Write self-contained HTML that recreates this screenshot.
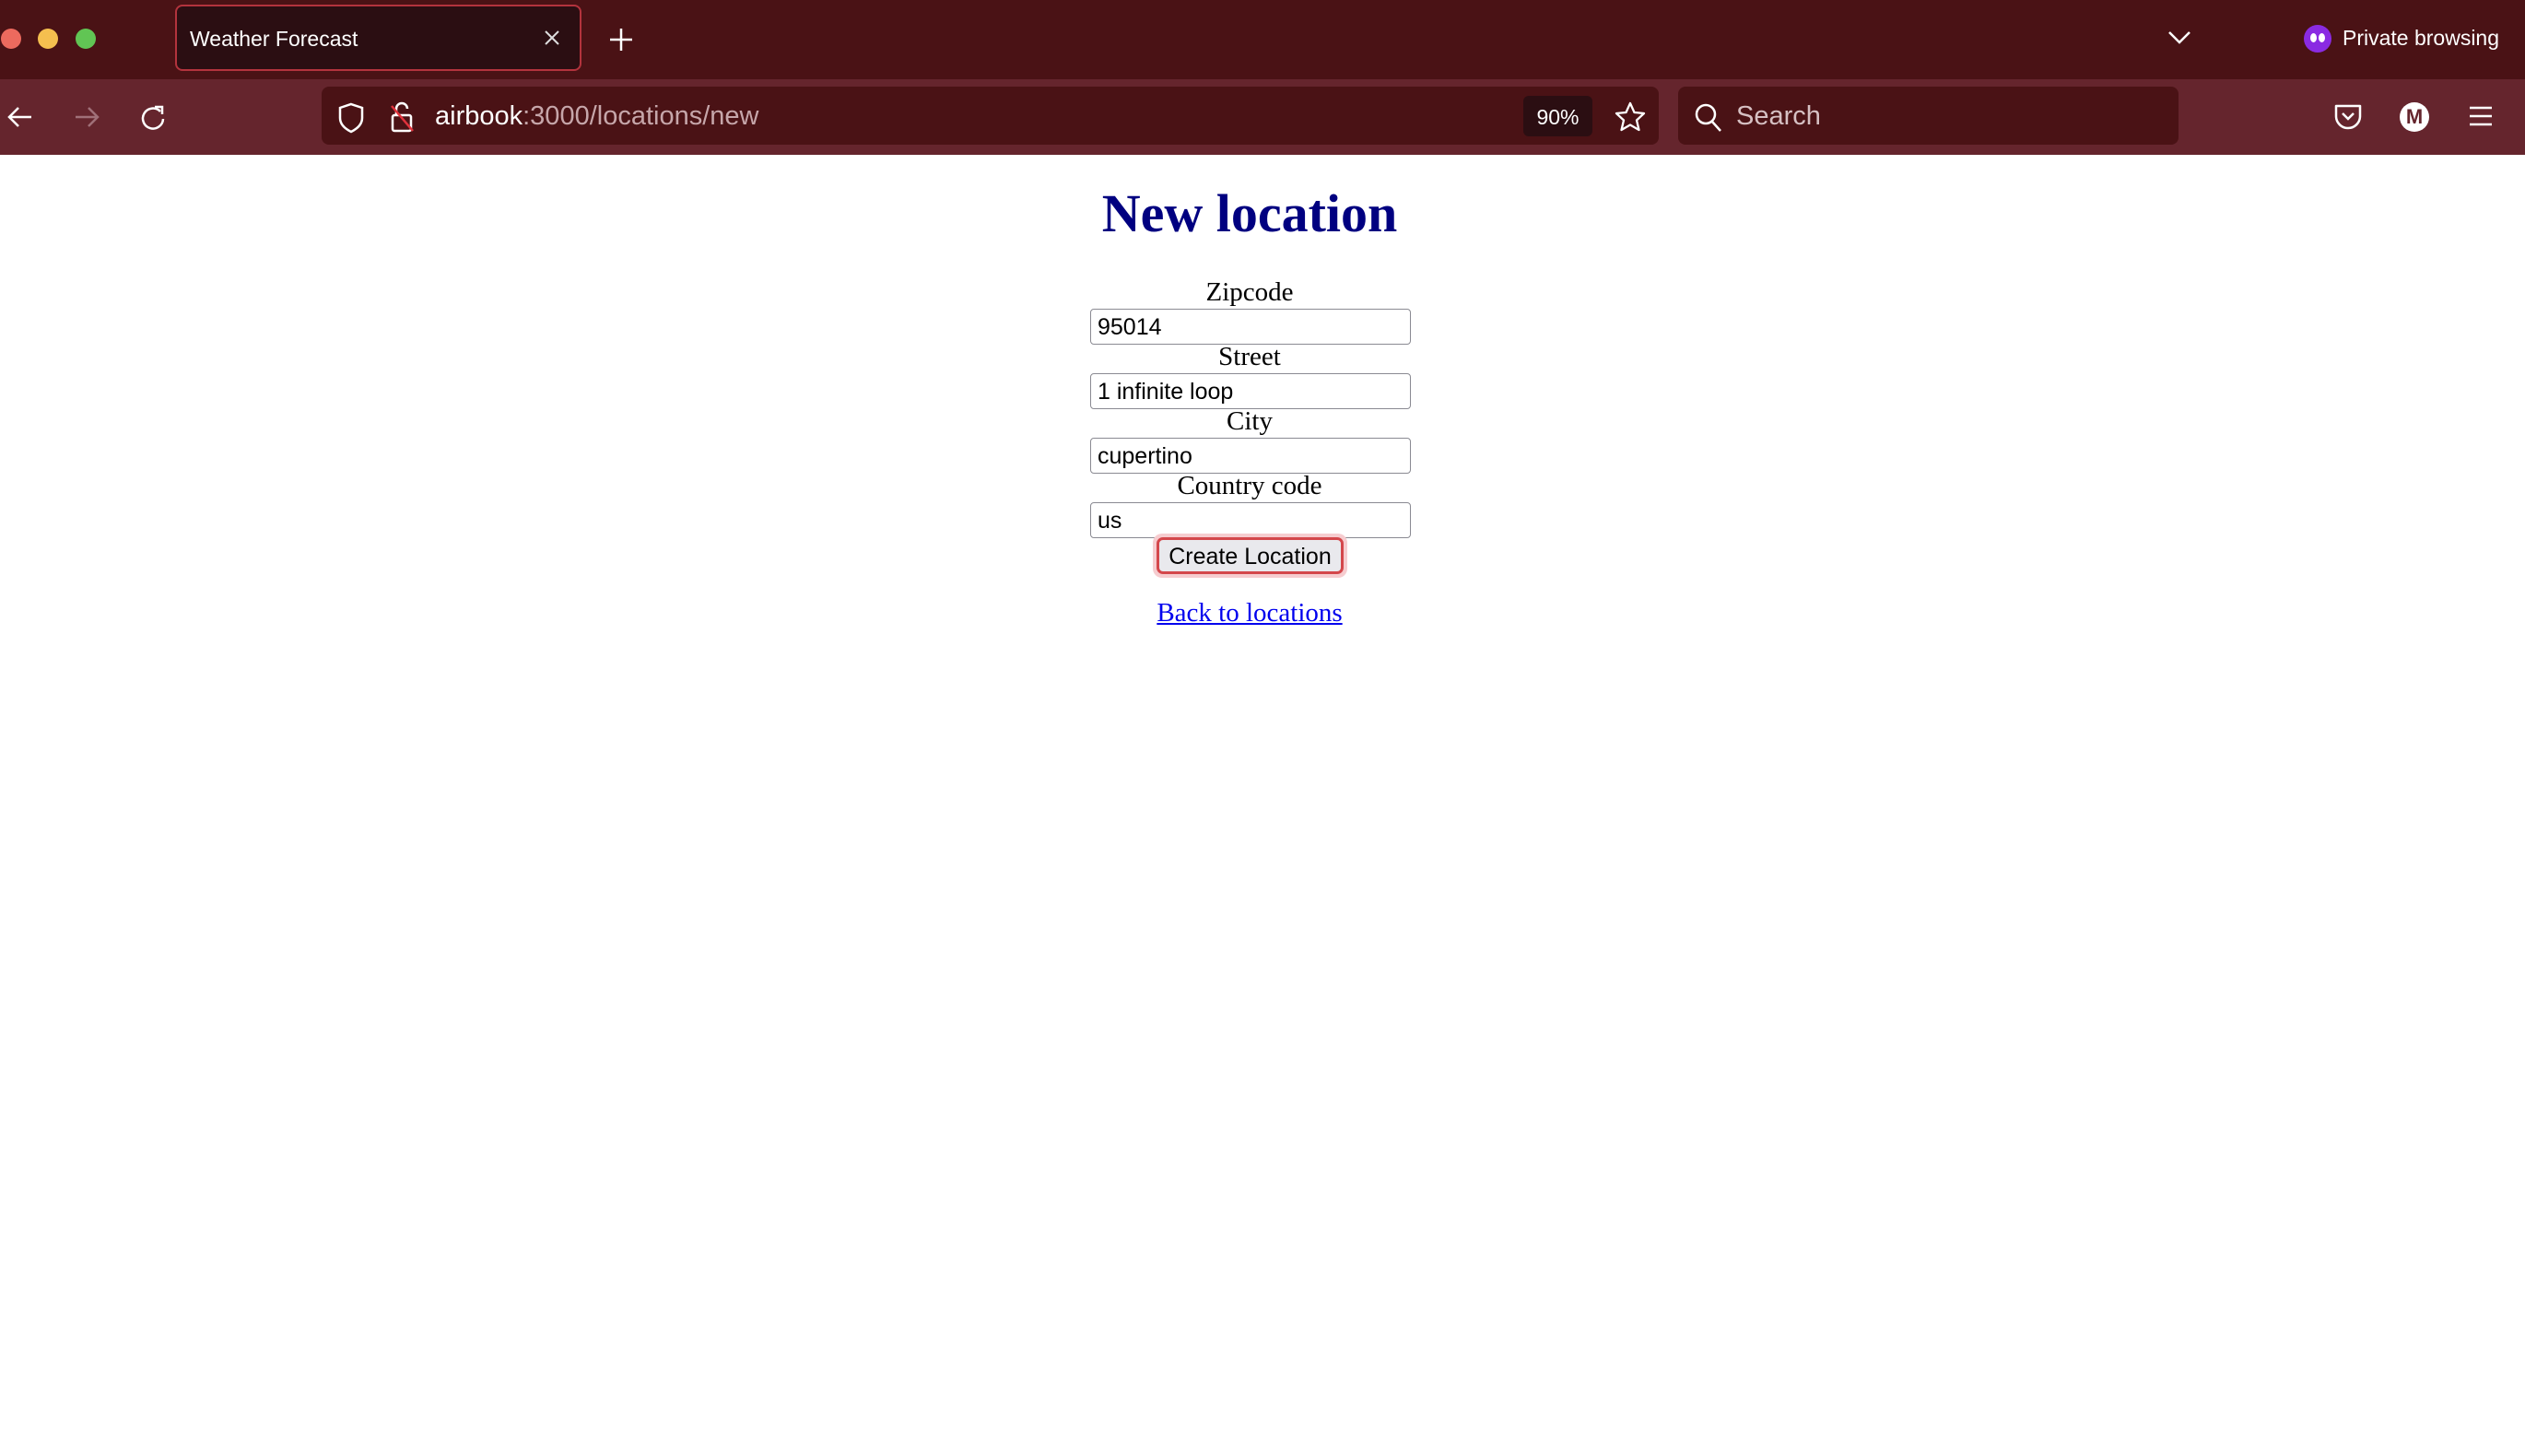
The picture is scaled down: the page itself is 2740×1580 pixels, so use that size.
<!DOCTYPE html>
<html><head><meta charset="utf-8"><style>
*{margin:0;padding:0;box-sizing:border-box}
body{width:2740px;height:1580px;background:#fff;position:relative;overflow:hidden;font-family:"Liberation Sans",sans-serif}
.abs{position:absolute}
#tabs{left:0;top:0;width:2740px;height:86px;background:#4a1215}
#tool{left:0;top:86px;width:2740px;height:82px;background:#65252d}
.dot{width:22px;height:22px;border-radius:50%;top:31px}
.tab{left:190px;top:5px;width:441px;height:72px;background:#2b0e12;border:2px solid #b3333d;border-radius:8px}
.lbl{left:1156px;width:400px;text-align:center;font-family:"Liberation Serif",serif;font-size:29px;color:#000;line-height:34px}
.inp{left:1183px;width:348px;height:39px;border:1.5px solid #8a8a92;border-radius:4px;font-size:25px;padding-left:7px;line-height:38px;color:#000}
</style></head><body>
<div id="tabs" class="abs"></div>
<div id="tool" class="abs"></div>
<div class="abs dot" style="left:1px;background:#ed6a5e"></div>
<div class="abs dot" style="left:41px;background:#f5bf4f"></div>
<div class="abs dot" style="left:82px;background:#61c554"></div>
<div class="abs tab"></div>
<div class="abs" style="left:206px;top:29px;color:#fff;font-size:23px">Weather Forecast</div>
<svg class="abs" style="left:590px;top:32px" width="18" height="18"><path d="M2 2L16 16M16 2L2 16" stroke="#ddd" stroke-width="2"/></svg>
<svg class="abs" style="left:660px;top:29px" width="28" height="28"><path d="M14 2V26M2 14H26" stroke="#fff" stroke-width="2.5"/></svg>
<svg class="abs" style="left:2352px;top:33px" width="26" height="16"><path d="M2 2L13 13L24 2" stroke="#fff" stroke-width="2.5" fill="none"/></svg>
<div class="abs" style="left:2500px;top:27px;width:30px;height:30px;border-radius:50%;background:#8a2be2"></div>
<div class="abs" style="left:2507px;top:36px;width:7px;height:10px;border-radius:50%;background:#fff"></div>
<div class="abs" style="left:2516px;top:36px;width:7px;height:10px;border-radius:50%;background:#fff"></div>
<div class="abs" style="left:2542px;top:28px;color:#fff;font-size:23px">Private browsing</div>
<svg class="abs" style="left:6px;top:113px" width="32" height="28"><path d="M28 14H4M14 4L4 14L14 24" stroke="#fff" stroke-width="2.5" fill="none"/></svg>
<svg class="abs" style="left:78px;top:113px" width="32" height="28"><path d="M4 14H28M18 4L28 14L18 24" stroke="#a07078" stroke-width="2.5" fill="none"/></svg>
<svg class="abs" style="left:150px;top:112px" width="32" height="32"><path d="M24 9A11 11 0 1 0 27 17" stroke="#fff" stroke-width="2.5" fill="none"/><path d="M18 4L26 4L26 12" stroke="#fff" stroke-width="2.5" fill="none"/></svg>
<div class="abs" style="left:349px;top:94px;width:1451px;height:63px;background:#4a1215;border-radius:8px"></div>
<svg class="abs" style="left:366px;top:111px" width="30" height="34"><path d="M15 2L27 6V17C27 24 21 29 15 32C9 29 3 24 3 17V6Z" stroke="#fff" stroke-width="2.5" fill="none"/></svg>
<svg class="abs" style="left:422px;top:109px" width="30" height="36"><rect x="4" y="16" width="20" height="17" rx="2" stroke="#fff" stroke-width="2.5" fill="none"/><path d="M8 16V9A6 6 0 0 1 20 9" stroke="#fff" stroke-width="2.5" fill="none"/><path d="M3 6L26 33" stroke="#e0323c" stroke-width="2.5"/></svg>
<div class="abs" style="left:472px;top:110px;font-size:29px;color:#fff">airbook<span style="color:#c6a6aa">:3000/locations/new</span></div>
<div class="abs" style="left:1653px;top:104px;width:75px;height:44px;background:#2b0e12;border-radius:6px;color:#fff;font-size:23px;text-align:center;line-height:46px">90%</div>
<svg class="abs" style="left:1752px;top:110px" width="34" height="34"><path d="M17 2L21.5 12L32 13L24 20.5L26.5 31L17 25.5L7.5 31L10 20.5L2 13L12.5 12Z" stroke="#fff" stroke-width="2.3" fill="none" stroke-linejoin="round"/></svg>
<div class="abs" style="left:1821px;top:94px;width:543px;height:63px;background:#4a1215;border-radius:8px"></div>
<svg class="abs" style="left:1838px;top:111px" width="32" height="34"><circle cx="13" cy="13" r="10" stroke="#fff" stroke-width="2.5" fill="none"/><path d="M20 21L29 31" stroke="#fff" stroke-width="2.5"/></svg>
<div class="abs" style="left:1884px;top:110px;font-size:29px;color:#d6c0c3">Search</div>
<svg class="abs" style="left:2532px;top:111px" width="32" height="32"><path d="M3 4H29V15A13 13 0 0 1 3 15Z" stroke="#fff" stroke-width="2.5" fill="none" stroke-linejoin="round"/><path d="M10 12L16 18L22 12" stroke="#fff" stroke-width="2.5" fill="none"/></svg>
<div class="abs" style="left:2604px;top:111px;width:32px;height:32px;border-radius:50%;background:#fff;color:#65252d;font-weight:bold;font-size:22px;text-align:center;line-height:32px">M</div>
<svg class="abs" style="left:2678px;top:113px" width="28" height="26"><path d="M2 4H26M2 13H26M2 22H26" stroke="#fff" stroke-width="2.5"/></svg>
<div class="abs" style="left:1056px;top:197px;width:600px;text-align:center;font-family:'Liberation Serif',serif;font-weight:bold;font-size:58px;color:#000080;line-height:70px">New location</div>
<div class="abs lbl" style="top:300px">Zipcode</div>
<div class="abs inp" style="top:335px">95014</div>
<div class="abs lbl" style="top:370px">Street</div>
<div class="abs inp" style="top:405px">1 infinite loop</div>
<div class="abs lbl" style="top:440px">City</div>
<div class="abs inp" style="top:475px">cupertino</div>
<div class="abs lbl" style="top:510px">Country code</div>
<div class="abs inp" style="top:545px">us</div>
<div class="abs" style="left:1251px;top:579px;width:211px;height:48px;border-radius:10px;background:#f6cccf"></div>
<div class="abs" style="left:1255px;top:583px;width:203px;height:40px;border:3px solid #d4474b;border-radius:7px;background:#e9e9ed;font-size:25px;text-align:center;line-height:36px;color:#000">Create Location</div>
<div class="abs" style="left:1156px;top:649px;width:400px;text-align:center;font-family:'Liberation Serif',serif;font-size:29px;color:#0000ee;text-decoration:underline">Back to locations</div>
</body></html>
